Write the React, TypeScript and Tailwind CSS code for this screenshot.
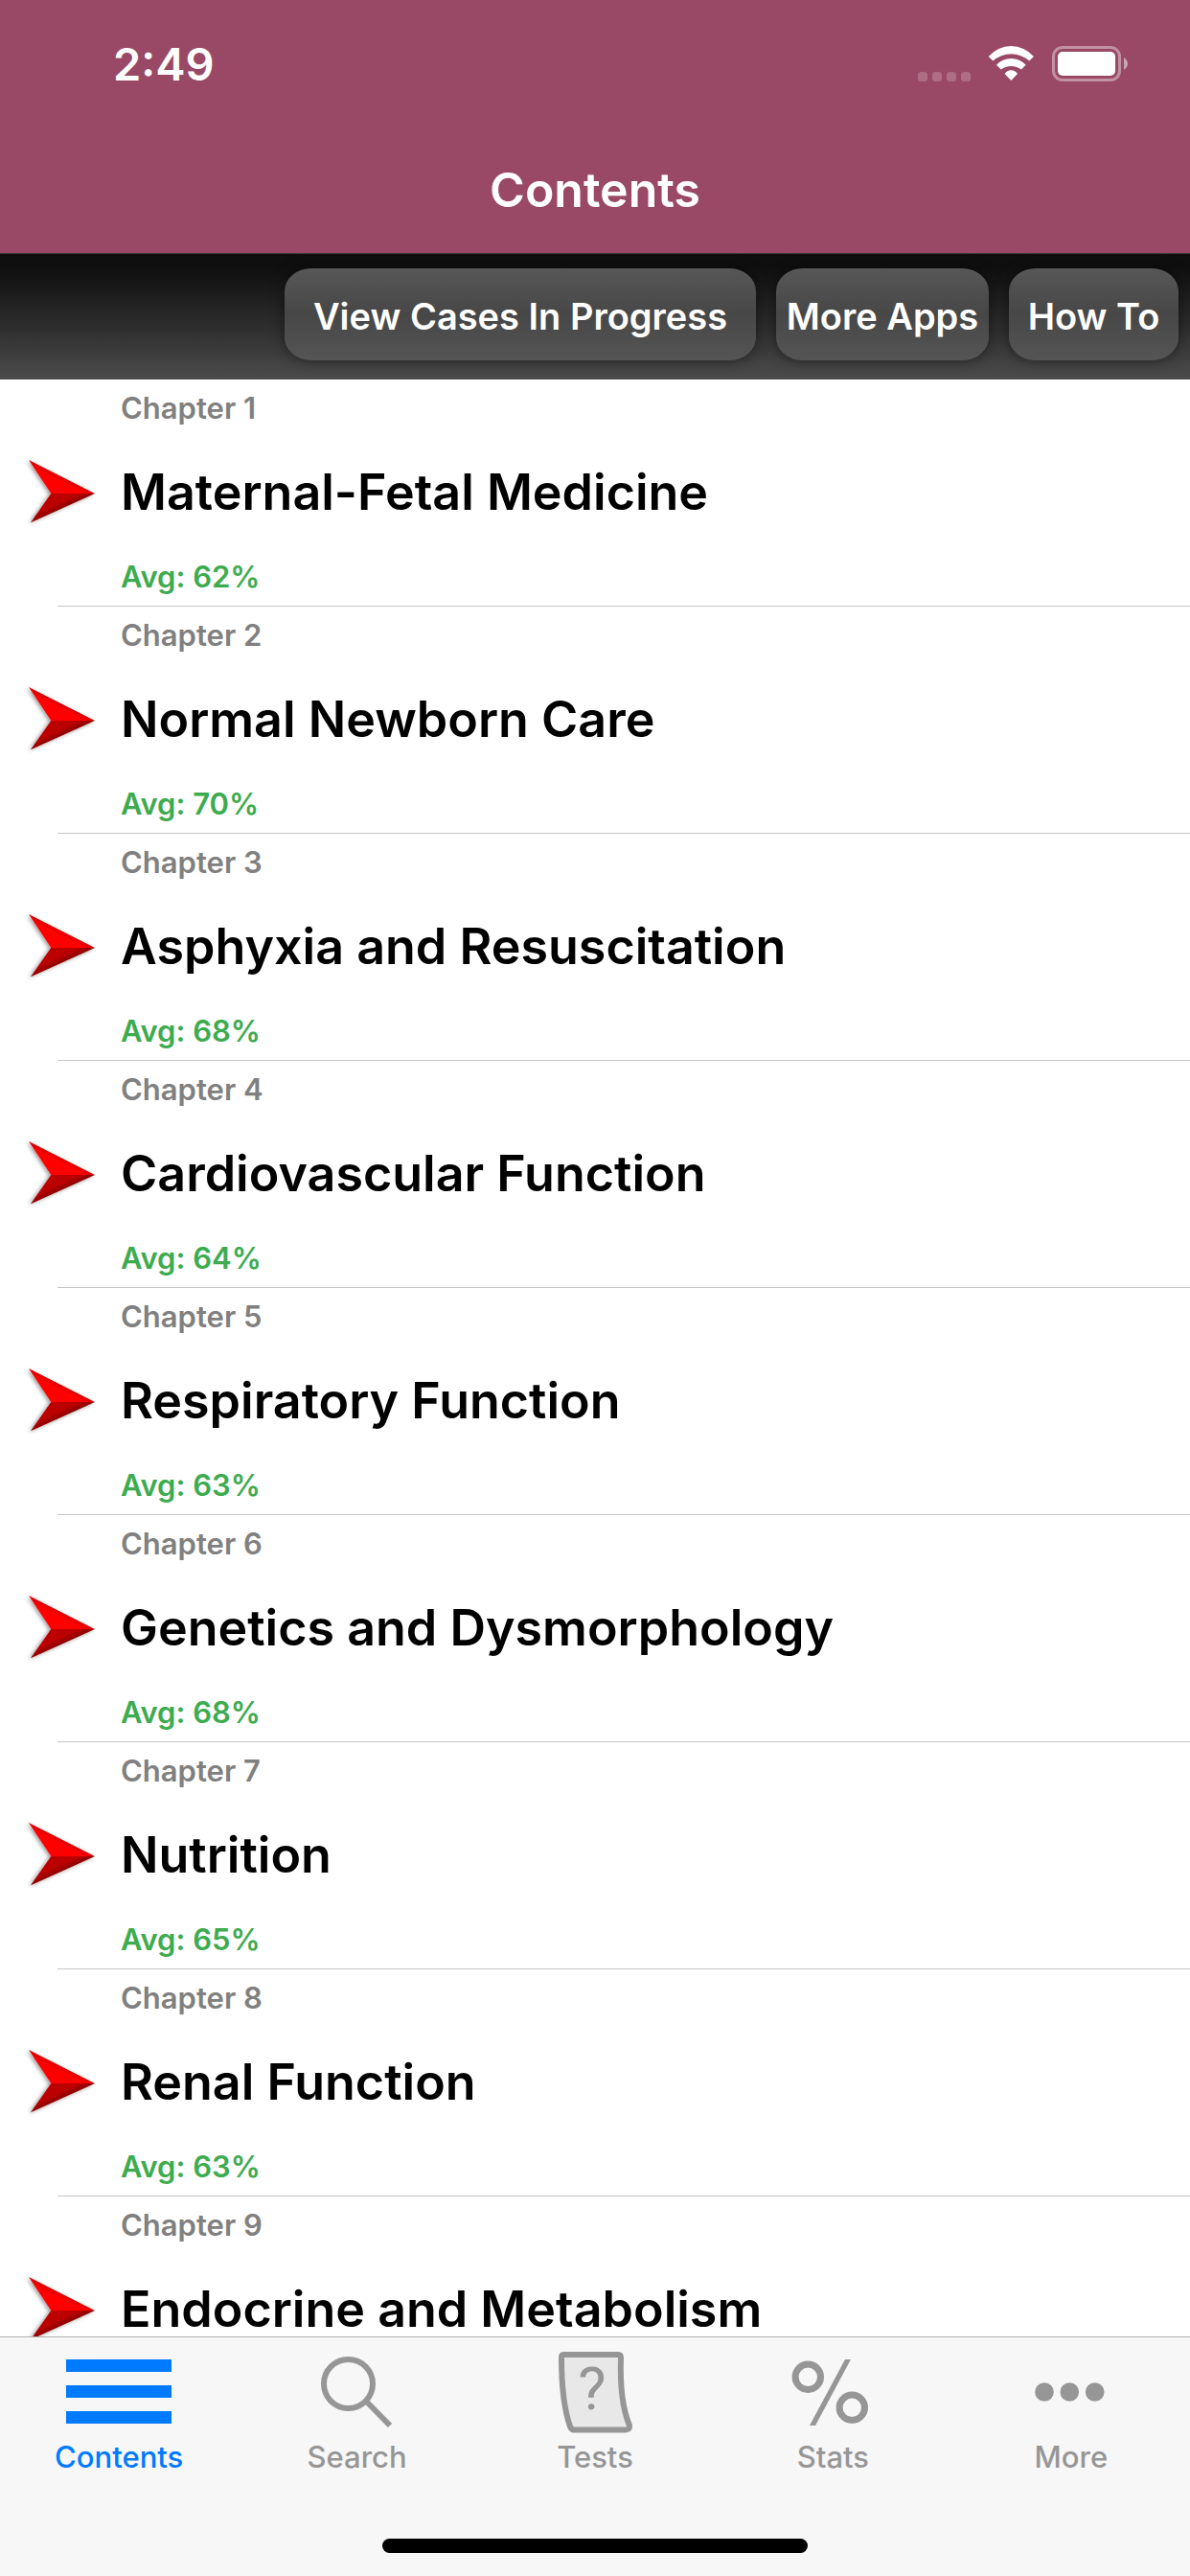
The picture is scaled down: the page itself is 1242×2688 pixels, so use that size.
import type { ReactNode } from 'react'

interface Chapter {
  title: string
  avg?: number
}

const chapters: Chapter[] = [
  { title: 'Maternal-Fetal Medicine', avg: 62 },
  { title: 'Normal Newborn Care', avg: 70 },
  { title: 'Asphyxia and Resuscitation', avg: 68 },
  { title: 'Cardiovascular Function', avg: 64 },
  { title: 'Respiratory Function', avg: 63 },
  { title: 'Genetics and Dysmorphology', avg: 68 },
  { title: 'Nutrition', avg: 65 },
  { title: 'Renal Function', avg: 63 },
  { title: 'Endocrine and Metabolism' },
]

function StatusBar() {
  return (
    <div className="flex h-[134px] items-center justify-between pl-[118px] pr-[64px] text-white">
      <span className="text-[47px] leading-[56px] font-semibold">2:49</span>
      <div className="flex items-center">
        <div className="mt-[26px] flex gap-[5px]">
          {[0, 1, 2, 3].map((i) => (
            <span key={i} className="size-[10px] rounded-[3px] bg-white/20" />
          ))}
        </div>
        <svg className="ml-[18px] h-[38px] w-[49px]" viewBox="0 0 49 38" fill="currentColor">
          <path d="M0.7 11A31 31 0 0 1 47.9 11L43.3 15.6A28.4 28.4 0 0 0 5.3 15.6Z" />
          <path d="M9 19.7A20.8 20.8 0 0 1 39.6 19.7L34.9 24.5A17.4 17.4 0 0 0 13.7 24.5Z" />
          <path d="M17.6 29A8 8 0 0 1 31 29L24.3 36Z" />
        </svg>
        <svg className="ml-[18px] h-[38px] w-[80px]" viewBox="0 0 80 38" fill="currentColor">
          <rect x="1.5" y="1.5" width="69" height="34" rx="9.5" fill="none" stroke="currentColor" strokeOpacity="0.4" strokeWidth="3" />
          <rect x="6" y="6" width="60" height="25" rx="5" />
          <path d="M75 12Q79 15 79 18.5T75 25Z" fillOpacity="0.5" />
        </svg>
      </div>
    </div>
  )
}

function ToolbarButton({ className, children }: { className: string; children: ReactNode }) {
  return (
    <button
      type="button"
      className={`h-[96px] rounded-[28px/24px] bg-linear-to-b from-[#575757] via-[#474747] to-[#555555] pt-[4px] text-center text-[38px] font-semibold whitespace-nowrap text-white shadow-[0_0_14px_rgba(0,0,0,0.5)] ${className}`}
    >
      {children}
    </button>
  )
}

function Arrow() {
  return (
    <svg className="h-[72px] w-[76px]" viewBox="0 0 76 72">
      <defs>
        <linearGradient id="arrowTop" x1="45" y1="18" x2="39" y2="30" gradientUnits="userSpaceOnUse">
          <stop offset="0" stopColor="#b80000" />
          <stop offset="0.6" stopColor="#ff0000" />
        </linearGradient>
        <linearGradient id="arrowBottom" x1="44" y1="53" x2="38" y2="40" gradientUnits="userSpaceOnUse">
          <stop offset="0" stopColor="#7d0000" />
          <stop offset="0.6" stopColor="#bb0000" />
        </linearGradient>
        <filter id="arrowShadow" x="-20%" y="-20%" width="140%" height="140%">
          <feDropShadow dx="-2" dy="1" stdDeviation="2" floodColor="#000" floodOpacity="0.4" />
        </filter>
      </defs>
      <g filter="url(#arrowShadow)">
        <path d="M6 2L75 37H29.3Z" fill="url(#arrowTop)" />
        <path d="M8 67.3L75 37H29.3Z" fill="url(#arrowBottom)" />
      </g>
    </svg>
  )
}

function ChapterRow({ chapter, number }: { chapter: Chapter; number: number }) {
  return (
    <li>
      <button type="button" className="flex w-full items-center pl-[24px] text-left">
        <Arrow />
        <span className="ml-[26px] flex flex-col whitespace-nowrap">
          <span className="text-[31px] leading-[60px] font-semibold text-[#808080]">Chapter {number}</span>
          <span className="text-[52px] leading-[116px] font-semibold text-black">{chapter.title}</span>
          <span className="h-[60px] text-[31px] leading-[60px] font-semibold text-[#3dab4f]">
            {chapter.avg !== undefined && `Avg: ${chapter.avg}%`}
          </span>
        </span>
      </button>
      <div className="ml-[60px] h-px bg-[#c6c6c8]" />
    </li>
  )
}

function ContentsIcon() {
  return (
    <>
      <rect x="5" y="12" width="110" height="13" />
      <rect x="5" y="39" width="110" height="13" />
      <rect x="5" y="66" width="110" height="13" />
    </>
  )
}

function SearchIcon() {
  return (
    <g fill="none" stroke="currentColor" strokeWidth="6">
      <circle cx="50.5" cy="37.5" r="25.5" />
      <path d="M70.5 57L94 81" />
    </g>
  )
}

function TestsIcon() {
  return (
    <>
      <path
        d="M27 7H84Q87 7 87 10C86 40 88 62 96 81Q96.5 85.5 92 85.5H38Q35.5 85.5 34 82C27 62 25 38 25 10Q25 7 27 7Z"
        fill="#e8e8e8"
        stroke="currentColor"
        strokeWidth="6"
        strokeLinejoin="round"
      />
      <text x="57" y="64" textAnchor="middle" className="font-[Roboto,sans-serif] text-[62px]">
        ?
      </text>
    </>
  )
}

function StatsIcon() {
  return (
    <>
      <g fill="none" stroke="currentColor" strokeWidth="7">
        <circle cx="34.3" cy="30.3" r="13.2" />
        <circle cx="80.3" cy="62.3" r="13.2" />
      </g>
      <path d="M73 12H79L42 81H36Z" />
    </>
  )
}

function MoreIcon() {
  return (
    <>
      <circle cx="32" cy="46" r="9.8" />
      <circle cx="58.3" cy="46" r="9.8" />
      <circle cx="84.7" cy="46" r="9.8" />
    </>
  )
}

const tabs = [
  { label: 'Contents', icon: <ContentsIcon />, active: true },
  { label: 'Search', icon: <SearchIcon />, active: false },
  { label: 'Tests', icon: <TestsIcon />, active: false },
  { label: 'Stats', icon: <StatsIcon />, active: false },
  { label: 'More', icon: <MoreIcon />, active: false },
]

function TabBar() {
  return (
    <nav className="shrink-0 border-t border-[#b0b0b0] bg-[#f7f7f7]">
      <div className="grid grid-cols-5 pt-[11px]">
        {tabs.map((tab) => (
          <button
            key={tab.label}
            type="button"
            aria-current={tab.active ? 'page' : undefined}
            className={`flex flex-col items-center ${tab.active ? 'text-[#007aff]' : 'text-[#969696]'}`}
          >
            <svg className="h-[92px] w-[120px]" viewBox="0 0 120 92" fill="currentColor">
              {tab.icon}
            </svg>
            <span className="text-[31px] leading-[44px] font-medium">{tab.label}</span>
          </button>
        ))}
      </div>
      {/* Home indicator */}
      <div className="mx-auto mt-[63px] mb-[24px] h-[15px] w-[444px] rounded-full bg-black" />
    </nav>
  )
}

export default function App() {
  return (
    <div className="flex h-screen flex-col overflow-hidden bg-white font-[Inter,sans-serif]">
      <header className="shrink-0 bg-[#994965]">
        <StatusBar />
        <h1 className="h-[130px] text-center text-[50px] leading-[128px] font-semibold text-white">Contents</h1>
      </header>
      <div className="flex h-[132px] shrink-0 items-start justify-end gap-[21px] border-t border-[#3a3a3a] bg-linear-to-b from-[#0f0f0f] from-10% to-[#4c4c4c] pt-[15px] pr-[12px]">
        <ToolbarButton className="w-[492px]">View Cases In Progress</ToolbarButton>
        <ToolbarButton className="w-[222px]">More Apps</ToolbarButton>
        <ToolbarButton className="w-[177px]">How To</ToolbarButton>
      </div>
      <ul className="min-h-0 flex-1 overflow-hidden">
        {chapters.map((chapter, i) => (
          <ChapterRow key={chapter.title} chapter={chapter} number={i + 1} />
        ))}
      </ul>
      <TabBar />
    </div>
  )
}
